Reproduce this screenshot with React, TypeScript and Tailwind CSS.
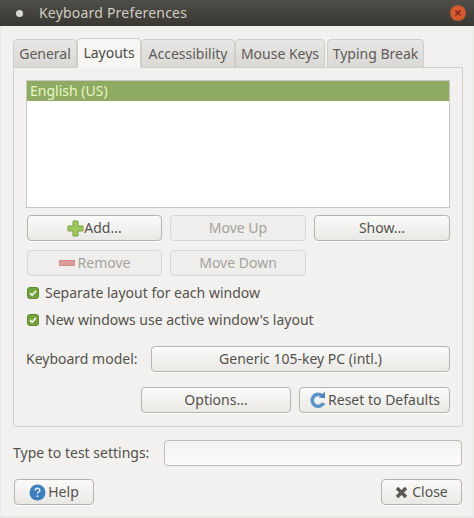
const btn =
  "h-[26px] rounded-[4px] border border-[#b5b3ae] bg-gradient-to-b from-[#fbfbfa] to-[#e9e8e5] text-[#55524d] flex items-center justify-center shadow-[0_1px_0_#ffffff]";
const disabled =
  "h-[26px] rounded-[4px] border border-[#d8d6d2] bg-[#efeeec] text-[#a5a29d] flex items-center justify-center";

const tabs = [
  { label: "General", width: "w-[64px]" },
  { label: "Layouts", width: "w-[64px]", active: true },
  { label: "Accessibility", width: "w-[94px]" },
  { label: "Mouse Keys", width: "w-[90px]" },
  { label: "Typing Break", width: "w-[97px] ml-[2px]" },
];

const CheckBox = () => (
  <svg width="12" height="12" viewBox="0 0 12 12" className="shrink-0">
    <rect x="0.5" y="0.5" width="11" height="11" rx="2.5" fill="#74a33c" stroke="#5c8a30" />
    <path d="M3 6.2 5.1 8.3 9 3.8" fill="none" stroke="#f4f6ee" strokeWidth="1.7" />
  </svg>
);

const Check = ({ label }: { label: string }) => (
  <div className="flex items-center gap-[6px] pl-[1px] h-[20px]">
    <CheckBox />
    <span>{label}</span>
  </div>
);

const App = () => {
  return (
    <div className="w-[474px] h-[518px] bg-[#e9e8e5] text-[14px] leading-[20px] text-[#55524d] font-['Noto_Sans','Open_Sans',sans-serif]">
      {/* title bar */}
      <div className="h-[26px] pl-[16px] pr-[7px] flex items-center justify-between bg-gradient-to-b from-[#4f4d47] to-[#3a3833] text-[#cfccc4]">
        <div className="flex items-center gap-[16px]">
          <span className="w-[7px] h-[7px] rounded-full bg-[#d9d7d1]" />
          <span className="text-[14px] tracking-[0.2px]">Keyboard Preferences</span>
        </div>
        <svg width="18" height="18" viewBox="0 0 18 18">
          <circle cx="9" cy="9" r="8" fill="#d8582f" />
          <circle cx="9" cy="9" r="8" fill="none" stroke="#7a5238" />
          <path d="M6.5 6.5 11.5 11.5M11.5 6.5 6.5 11.5" stroke="#7c2a18" strokeWidth="1.5" />
        </svg>
      </div>

      <div className="h-[490px] mx-[1px] bg-[#f2f1ef] pl-[12px] pr-[10px] pt-[12px]">
        {/* tabs */}
        <div className="flex h-[30px] -mb-[1px] relative">
          {tabs.map((t) => (
            <div
              key={t.label}
              className={`${t.width} flex items-center justify-center rounded-t-[4px] border border-[#cfcdc9] ${
                t.active
                  ? "bg-[#f7f6f5] border-b-[#f7f6f5] text-[#4c4a45]"
                  : "mt-[1px] bg-gradient-to-b from-[#e8e7e5] to-[#d9d8d5] text-[#5f5c57]"
              }`}
            >
              {t.label}
            </div>
          ))}
        </div>

        {/* panel */}
        <div className="h-[360px] border border-[#d2d0cc] rounded-b-[3px] bg-[#f2f1ef] px-[12px] pt-[12px]">
          <div className="h-[128px] border border-[#c9c7c2] bg-white">
            <div className="h-[20px] px-[3px] bg-[#8fab62] text-[#e8f5c8] flex items-center">English (US)</div>
          </div>

          <div className="grid grid-cols-[135px_136px_136px] gap-x-[8px] gap-y-[9px] mt-[7px] pl-[1px]">
            <div className={btn}>
              <svg width="17" height="17" viewBox="0 0 17 17" className="shrink-0">
                <path
                  d="M6 1h5v5h5v5h-5v5H6v-5H1V6h5z"
                  fill="#9cc75c"
                  stroke="#7da544"
                  strokeLinejoin="round"
                />
              </svg>
              <span>Add...</span>
            </div>
            <div className={disabled}>Move Up</div>
            <div className={btn}>Show...</div>
            <div className={disabled}>
              <span className="w-[16px] h-[6px] bg-[#dc9a9a] border border-[#cf8c8c] mr-[3px]" />
              Remove
            </div>
            <div className={disabled}>Move Down</div>
          </div>

          <div className="mt-[7px] flex flex-col gap-[7px]">
            <Check label="Separate layout for each window" />
            <Check label="New windows use active window's layout" />
          </div>

          <div className="flex items-center mt-[16px]">
            <span className="w-[125px] whitespace-nowrap">Keyboard model:</span>
            <div className={`${btn} w-[299px]`}>Generic 105-key PC (intl.)</div>
          </div>

          <div className="flex justify-end gap-[8px] mt-[15px]">
            <div className={`${btn} w-[150px]`}>Options...</div>
            <div className={`${btn} w-[151px]`}>
              <svg width="18" height="18" viewBox="0 0 18 18" className="shrink-0 mr-[1px]">
                <path
                  d="M13 4.6A6 6 0 1 0 14.6 12"
                  fill="none"
                  stroke="#5c94c8"
                  strokeWidth="3.6"
                />
                <path d="M9.5 6.5 16 .8v6.4z" fill="#4a84bb" />
              </svg>
              Reset to Defaults
            </div>
          </div>
        </div>

        {/* test input */}
        <div className="flex items-center mt-[13px]">
          <span className="w-[151px] whitespace-nowrap">Type to test settings:</span>
          <div className="w-[298px] h-[26px] rounded-[4px] border border-[#bdbbb6] bg-gradient-to-b from-[#f4f3f1] to-[#fbfbfa]" />
        </div>

        {/* footer */}
        <div className="flex justify-between mt-[13px] pl-[1px] pr-[1px]">
          <div className={`${btn} w-[80px]`}>
            <svg width="17" height="17" viewBox="0 0 17 17" className="shrink-0 mr-[2px]">
              <circle cx="8.5" cy="8.5" r="8" fill="#3f7fbd" />
              <path
                d="M6.3 6.6c0-3 4.5-3 4.5-.3 0 1.7-2.3 1.7-2.3 3.4"
                fill="none"
                stroke="#e8f0f8"
                strokeWidth="1.4"
              />
              <circle cx="8.5" cy="12.2" r="0.9" fill="#e8f0f8" />
            </svg>
            Help
          </div>
          <div className={`${btn} w-[81px]`}>
            <svg width="13" height="13" viewBox="0 0 13 13" className="shrink-0 mr-[4px]">
              <path d="M2 2 11 11M11 2 2 11" stroke="#5a5751" strokeWidth="3.4" />
            </svg>
            Close
          </div>
        </div>
      </div>
    </div>
  );
};

export default App;
